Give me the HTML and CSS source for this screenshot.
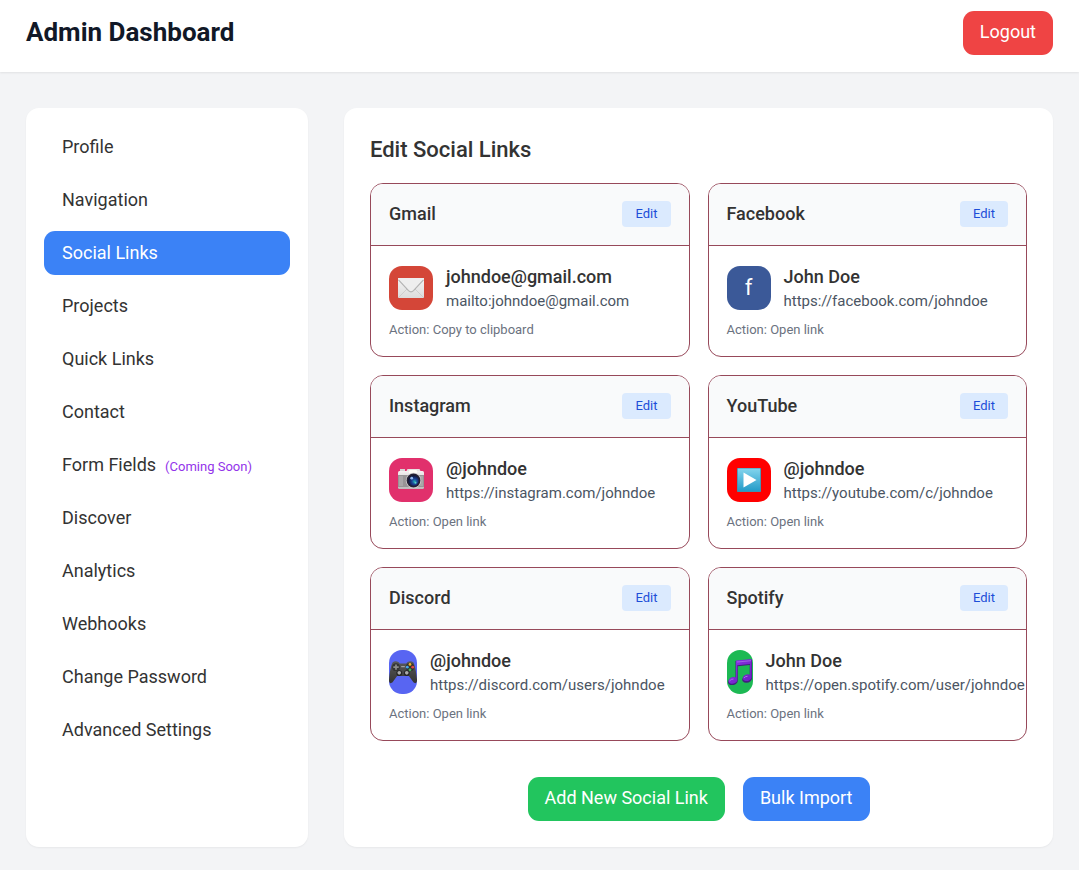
FILE: index.html
```html
<!DOCTYPE html>
<html lang="en">
<head>
<meta charset="utf-8">
<meta name="viewport" content="width=device-width, initial-scale=1">
<title>Admin Dashboard</title>
<link rel="stylesheet" href="styles.css">
</head>
<body>
<header class="topbar">
  <h1 class="topbar-title">Admin Dashboard</h1>
  <button class="btn btn-red" type="button">Logout</button>
</header>
<div class="layout">
  <nav class="sidebar" aria-label="Admin sections">
    <a class="nav-item" href="#profile">Profile</a>
    <a class="nav-item" href="#navigation">Navigation</a>
    <a class="nav-item active" href="#social" aria-current="page">Social Links</a>
    <a class="nav-item" href="#projects">Projects</a>
    <a class="nav-item" href="#quick">Quick Links</a>
    <a class="nav-item" href="#contact">Contact</a>
    <a class="nav-item" href="#forms">Form Fields<span class="soon">(Coming Soon)</span></a>
    <a class="nav-item" href="#discover">Discover</a>
    <a class="nav-item" href="#analytics">Analytics</a>
    <a class="nav-item" href="#webhooks">Webhooks</a>
    <a class="nav-item" href="#password">Change Password</a>
    <a class="nav-item" href="#advanced">Advanced Settings</a>
  </nav>
  <main class="panel">
    <h2 class="panel-title">Edit Social Links</h2>
    <div class="cards">
      <article class="card">
        <div class="card-head"><h3 class="card-title">Gmail</h3><button class="edit" type="button">Edit</button></div>
        <div class="card-body">
          <div class="account">
            <div class="icon gmail">
              <svg class="glyph" viewBox="0 0 26 26" aria-hidden="true">
                <defs><linearGradient id="paper" x1="0" y1="0" x2="0" y2="1"><stop offset="0" stop-color="#f4f4f4"/><stop offset="1" stop-color="#dcdcdc"/></linearGradient></defs>
                <rect x="0" y="3" width="26" height="20" rx="1" fill="url(#paper)"/>
                <path d="M1 22 10 13M25 22 16 13" stroke="#c9c9c9" stroke-width=".8" fill="none"/>
                <path d="M0 4.300 10.500 15.600Q13 18 15.500 15.600L26 4.300V3H0Z" fill="#eeeeee"/>
                <path d="M.5 4.800 10.500 15.600Q13 18 15.500 15.600L25.500 4.800" stroke="#b3b3b3" stroke-width="1.200" fill="none"/>
              </svg>
            </div>
            <div class="details"><p class="name">johndoe@gmail.com</p><p class="url">mailto:johndoe@gmail.com</p></div>
          </div>
          <p class="action">Action: Copy to clipboard</p>
        </div>
      </article>
      <article class="card">
        <div class="card-head"><h3 class="card-title">Facebook</h3><button class="edit" type="button">Edit</button></div>
        <div class="card-body">
          <div class="account">
            <div class="icon facebook">f</div>
            <div class="details"><p class="name">John Doe</p><p class="url">https://facebook.com/johndoe</p></div>
          </div>
          <p class="action">Action: Open link</p>
        </div>
      </article>
      <article class="card">
        <div class="card-head"><h3 class="card-title">Instagram</h3><button class="edit" type="button">Edit</button></div>
        <div class="card-body">
          <div class="account">
            <div class="icon instagram">
              <svg class="glyph" viewBox="0 0 26 26" aria-hidden="true">
                <defs>
                  <linearGradient id="metal" x1="0" y1="0" x2="0" y2="1"><stop offset="0" stop-color="#f5f1f2"/><stop offset="1" stop-color="#bdb9ba"/></linearGradient>
                  <radialGradient id="lens" cx=".6" cy=".6" r=".6"><stop offset="0" stop-color="#1fa8b8"/><stop offset=".45" stop-color="#1c3f92"/><stop offset="1" stop-color="#101334"/></radialGradient>
                </defs>
                <path d="M2 4V2H7V4Z" fill="#d8d4d5"/>
                <path d="M8 5 9.500 2H21.500L23 5Z" fill="#e6e2e3"/>
                <rect x="0" y="4" width="26" height="18" rx="1.500" fill="url(#metal)"/>
                <path d="M0 8H26V20H0Z" fill="#989496"/>
                <path d="M1 9H5V19H1ZM22 9H25V19H22Z" fill="#aaa6a8"/>
                <rect x="11" y="3" width="8" height="3.500" rx="1" fill="#fffdf6"/>
                <circle cx="15.500" cy="13.500" r="7.700" fill="#d6d2d4"/>
                <circle cx="15.500" cy="13.500" r="6.900" fill="#242033"/>
                <circle cx="15.500" cy="13.500" r="5.200" fill="url(#lens)"/>
                <circle cx="13.700" cy="11.200" r="1.400" fill="#91b9ee"/>
                <circle cx="17.500" cy="15.700" r="1" fill="#55d3c4"/>
              </svg>
            </div>
            <div class="details"><p class="name">@johndoe</p><p class="url">https://instagram.com/johndoe</p></div>
          </div>
          <p class="action">Action: Open link</p>
        </div>
      </article>
      <article class="card">
        <div class="card-head"><h3 class="card-title">YouTube</h3><button class="edit" type="button">Edit</button></div>
        <div class="card-body">
          <div class="account">
            <div class="icon youtube">
              <svg class="glyph" viewBox="0 0 26 26" aria-hidden="true">
                <defs><linearGradient id="sky" x1="0" y1="0" x2="0" y2="1"><stop offset="0" stop-color="#83d4ed"/><stop offset="1" stop-color="#239bc8"/></linearGradient></defs>
                <rect x="1" y="1" width="24" height="24" rx=".8" fill="#468eaa"/>
                <rect x="1.800" y="1.500" width="22.400" height="22.700" fill="url(#sky)"/>
                <path d="M7.500 5.500V20.500L20.500 13Z" fill="#fff"/>
              </svg>
            </div>
            <div class="details"><p class="name">@johndoe</p><p class="url">https://youtube.com/c/johndoe</p></div>
          </div>
          <p class="action">Action: Open link</p>
        </div>
      </article>
      <article class="card">
        <div class="card-head"><h3 class="card-title">Discord</h3><button class="edit" type="button">Edit</button></div>
        <div class="card-body">
          <div class="account">
            <div class="icon discord">
              <svg class="glyph glyph-wide" viewBox="0 0 26 26" aria-hidden="true">
                <defs><linearGradient id="pad" x1="0" y1="0" x2="0" y2="1"><stop offset="0" stop-color="#5a5a5a"/><stop offset="1" stop-color="#343434"/></linearGradient></defs>
                <path d="M3.500 4Q6 2.200 9 4L10 5H16L17 4Q20 2.200 22.500 4C24 6 25.500 14 26 20C26.200 24 23.500 24.500 21.500 21L18.500 16.800H7.500L4.500 21C2.500 24.500-.2 24 0 20C.5 14 2 6 3.500 4Z" fill="url(#pad)"/>
                <circle cx="6.500" cy="8.500" r="3.600" fill="#343434"/>
                <path d="M5.700 6H7.300V7.700H9V9.300H7.300V11H5.700V9.300H4V7.700H5.700Z" fill="#8b8b8b"/>
                <circle cx="19.500" cy="8.500" r="3.800" fill="#303030"/>
                <circle cx="19.500" cy="6" r="1.300" fill="#f0b52b"/><circle cx="22" cy="8.500" r="1.300" fill="#e44540"/><circle cx="19.500" cy="11" r="1.300" fill="#45b75a"/><circle cx="17" cy="8.500" r="1.300" fill="#45a7e8"/>
                <circle cx="9.500" cy="14" r="2.700" fill="#242424"/><circle cx="16.500" cy="14" r="2.700" fill="#242424"/>
                <circle cx="9.500" cy="13.800" r="1.700" fill="#aaaaaa"/><circle cx="16.500" cy="13.800" r="1.700" fill="#aaaaaa"/>
                <path d="M11.300 8H14.700" stroke="#a0a0a0"/>
              </svg>
            </div>
            <div class="details"><p class="name">@johndoe</p><p class="url">https://discord.com/users/johndoe</p></div>
          </div>
          <p class="action">Action: Open link</p>
        </div>
      </article>
      <article class="card">
        <div class="card-head"><h3 class="card-title">Spotify</h3><button class="edit" type="button">Edit</button></div>
        <div class="card-body">
          <div class="account">
            <div class="icon spotify">
              <svg class="glyph" viewBox="0 0 26 26" aria-hidden="true">
                <defs><linearGradient id="note" x1="0" y1="0" x2="1" y2="1"><stop offset="0" stop-color="#8d35e8"/><stop offset="1" stop-color="#6a1fc0"/></linearGradient></defs>
                <path d="M8.500 2 25 .5V19A5 3.600-18 1 1 22.700 16.500V6L10.800 7.200V22A5 3.600-18 1 1 8.500 19Z" fill="#41207d"/>
                <path d="M9 1.500 24.500 0V18.500A4.500 3.300-18 1 1 23 15.700V5L10.300 6.200V21.500A4.500 3.300-18 1 1 9 18.500Z" fill="url(#note)"/>
                <path d="M10 3 24 1.700" stroke="#ad70ee" stroke-width=".8"/>
                <path d="M2.500 22Q4 19.800 6.500 20M17 19Q18 17.300 20.500 17.300" fill="none" stroke="#b985ee" stroke-width=".8"/>
              </svg>
            </div>
            <div class="details"><p class="name">John Doe</p><p class="url">https://open.spotify.com/user/johndoe</p></div>
          </div>
          <p class="action">Action: Open link</p>
        </div>
      </article>
    </div>
    <div class="actions">
      <button class="btn btn-green" type="button">Add New Social Link</button>
      <button class="btn btn-blue" type="button">Bulk Import</button>
    </div>
  </main>
</div>
</body>
</html>
```
FILE: styles.css
```css
* { box-sizing: border-box; }
body {
  margin: 0;
  background: #f3f4f6;
  color: #333;
  font: 18px/26px Roboto, "Liberation Sans", sans-serif;
}
h1, h2, h3, p { margin: 0; }
button { font: inherit; border: 0; cursor: pointer; }

.topbar {
  display: flex;
  justify-content: space-between;
  align-items: flex-start;
  padding: 11px 26px 17px;
  background: #fff;
  box-shadow: 0 1px 2px rgba(0, 0, 0, .08);
}
.topbar-title { font-size: 26px; line-height: 42px; font-weight: 700; color: #111827; }

.btn { padding: 8px 17px 10px; border-radius: 11px; color: #fff; }
.btn-red { background: #ef4444; }
.btn-green { background: #22c55e; }
.btn-blue { background: #3b82f6; }

.layout { display: flex; gap: 36px; padding: 36px 26px 23px; }
.sidebar, .panel {
  background: #fff;
  border-radius: 13px;
  box-shadow: 0 1px 2px rgba(0, 0, 0, .05);
}
.sidebar {
  flex: 0 0 282px;
  display: flex;
  flex-direction: column;
  gap: 9px;
  padding: 17px 18px;
}
.nav-item {
  padding: 9px 18px;
  border-radius: 11px;
  color: #333;
  text-decoration: none;
}
.nav-item.active { background: #3b82f6; color: #fff; }
.soon { margin-left: 9px; font-size: 13px; line-height: 18px; color: #9333ea; }

.panel { flex: 1; min-width: 0; padding: 26px; }
.panel-title { margin-bottom: 18px; font-size: 22px; line-height: 31px; font-weight: 500; }
.cards { display: grid; grid-template-columns: repeat(2, minmax(0, 1fr)); gap: 18px; }
.card { overflow: hidden; border: 1px solid #97495a; border-radius: 13px; }
.card-head {
  display: flex;
  justify-content: space-between;
  align-items: center;
  padding: 17px 18px 18px;
  background: #f9fafb;
  border-bottom: 1px solid #97495a;
}
.card-title { font-size: 18px; line-height: 26px; font-weight: 500; }
.edit {
  height: 26px;
  padding: 0 13px;
  border-radius: 4px;
  background: #dbeafe;
  color: #1d4ed8;
  font-size: 13px;
  line-height: 18px;
}
.card-body { padding: 18px; }
.account { display: flex; align-items: center; gap: 13px; margin-bottom: 9px; }
.icon {
  width: 44px;
  height: 44px;
  display: flex;
  align-items: center;
  justify-content: center;
  border-radius: 13px;
  color: #fff;
  font-size: 22px;
}
.glyph { flex: none; width: 26px; height: 26px; }
.glyph-wide { width: 28px; height: 28px; }
.gmail { background: #d44638; }
.facebook { background: #3b5998; }
.instagram { background: #e1306c; }
.youtube { background: #f00; }
.discord { width: 28px; flex: none; background: #5865f2; }
.spotify { background: #1db954; }
.name { font-weight: 500; }
.url { font-size: 15px; line-height: 22px; color: #4b5563; white-space: nowrap; }
.action { font-size: 13px; line-height: 17px; color: #6b7280; }
.actions { display: flex; justify-content: center; gap: 18px; margin-top: 36px; }
```
